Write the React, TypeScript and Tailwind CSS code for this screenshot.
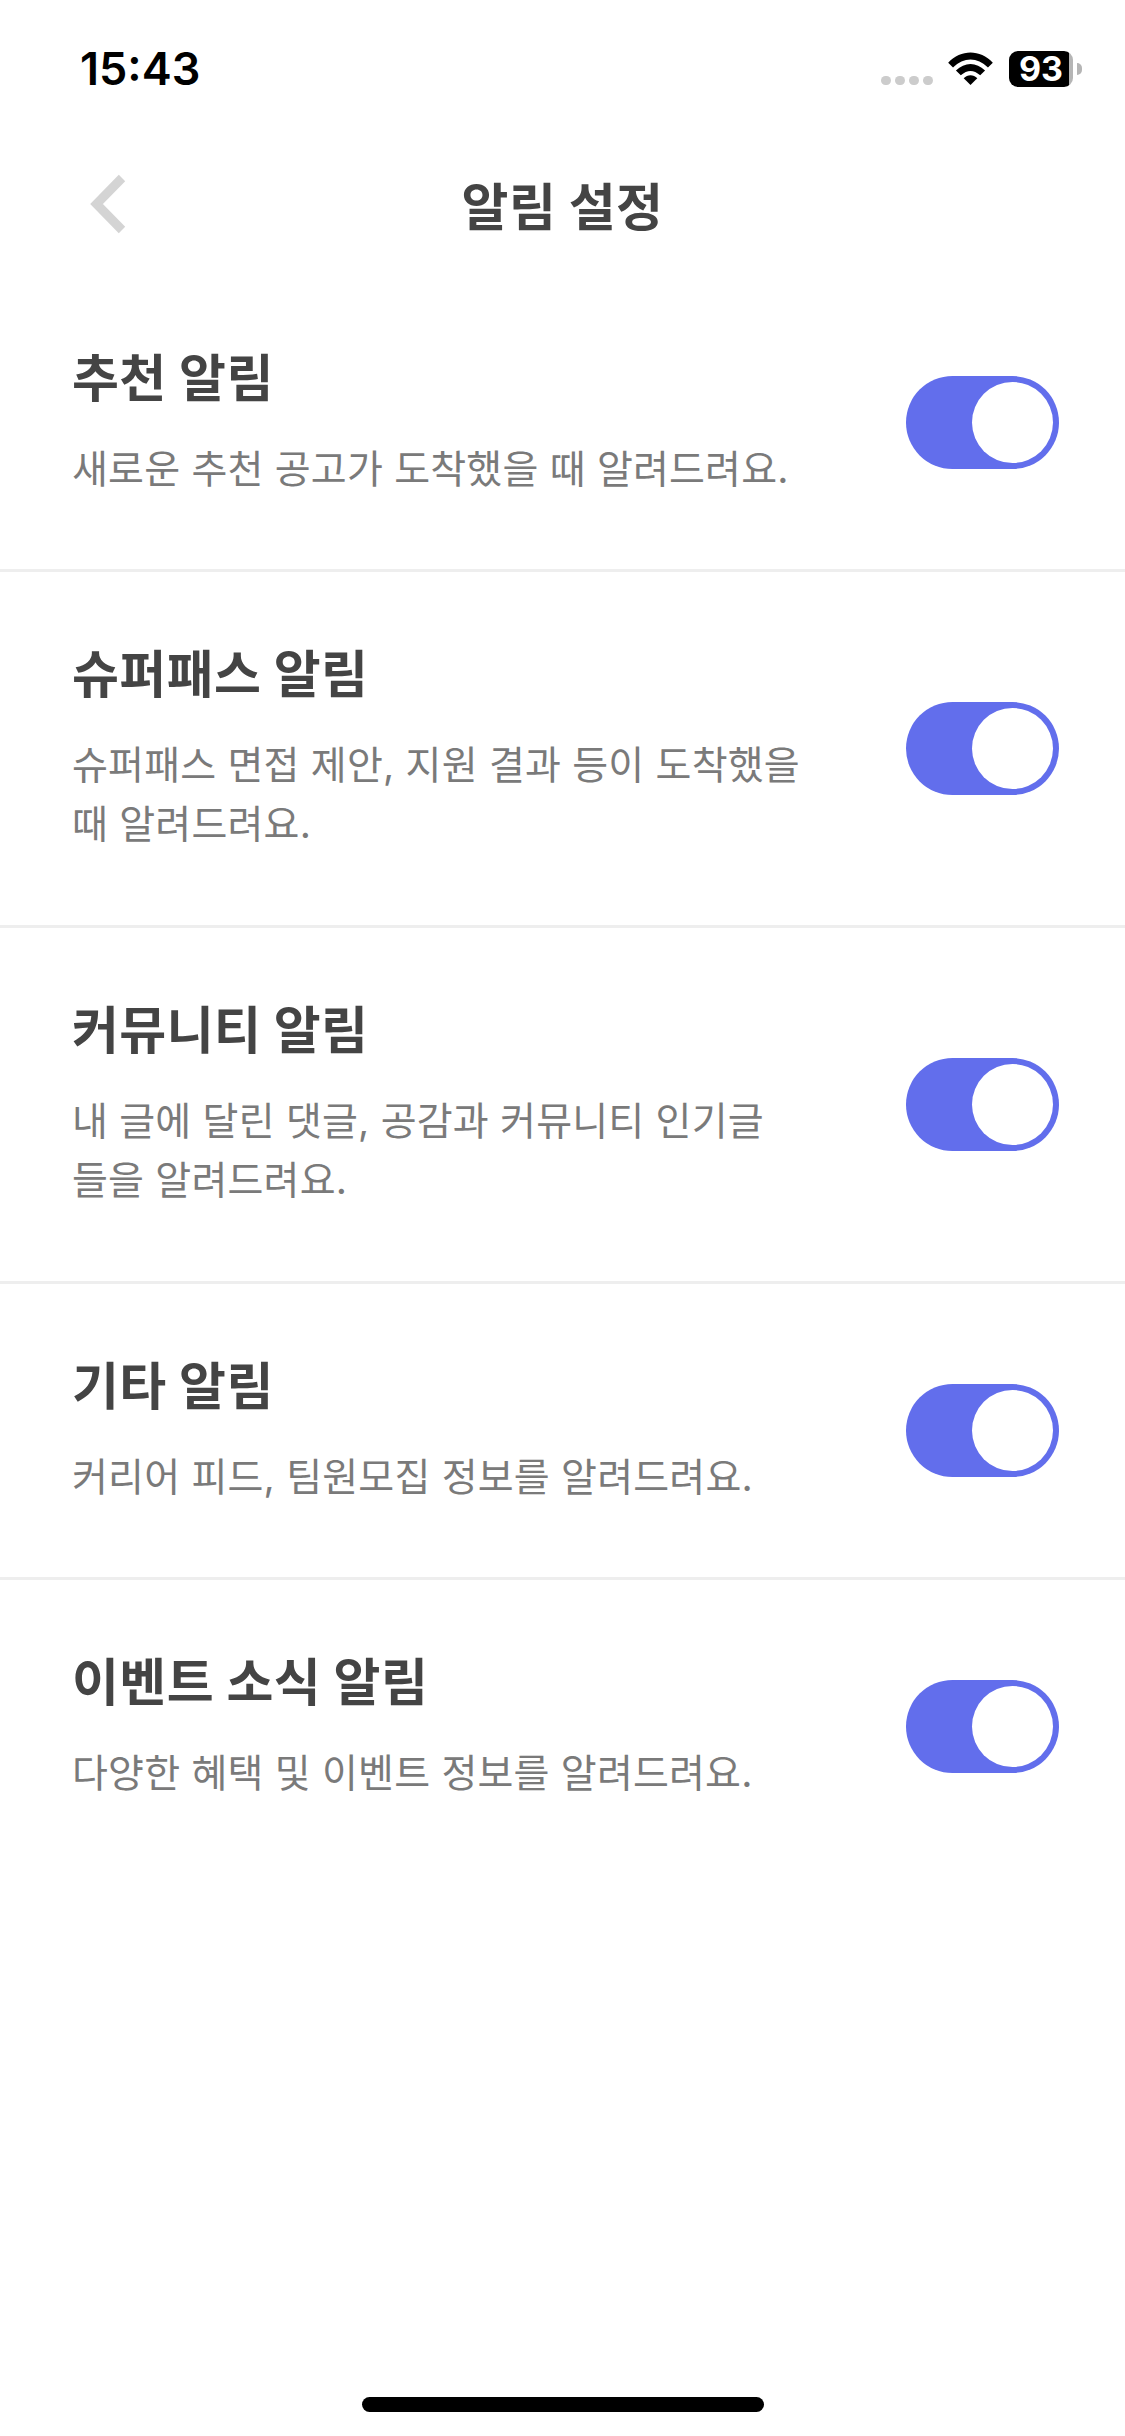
const F = "font-['Inter','Noto_Sans_CJK_KR',sans-serif]";

function Toggle() {
  return (
    <div className="w-[153px] h-[93px] rounded-full bg-[#626eec] p-[6px] flex justify-end shrink-0">
      <div className="w-[81px] h-[81px] rounded-full bg-white" />
    </div>
  );
}

function Row({ title, lines, h, last }: { title: string; lines: string[]; h: string; last?: boolean }) {
  return (
    <div className={`${h} ${last ? "" : "border-b-[3px] border-[#eeeeee]"} pl-[72px] pr-[66px] flex justify-between items-center`}>
      <div className="flex flex-col">
        <div className="text-[51px] leading-[62px] font-bold text-[#444444] tracking-[0.4px]">{title}</div>
        <div className="mt-[29px] text-[39px] leading-[59px] text-[#7a7a7a] tracking-[0.2px]">
          {lines.map((l) => (
            <div key={l}>{l}</div>
          ))}
        </div>
      </div>
      <Toggle />
    </div>
  );
}

export default function App() {
  return (
    <div className={`${F} relative w-[1125px] h-[2436px] bg-white overflow-hidden`}>
      <div className="h-[140px] pl-[80px] pr-[43px] flex justify-between items-start">
        <span className="mt-[42px] text-[45px] leading-[54px] font-semibold text-black">15:43</span>
        <div className="mt-[51px] h-[36px] flex items-end">
          <div className="flex gap-[4px] mb-[2px] mr-[15px]">
            <i className="block w-[10px] h-[9px] rounded-full bg-[#cccccc]" />
            <i className="block w-[10px] h-[9px] rounded-full bg-[#cccccc]" />
            <i className="block w-[10px] h-[9px] rounded-full bg-[#cccccc]" />
            <i className="block w-[10px] h-[9px] rounded-full bg-[#cccccc]" />
          </div>
          <svg width="45" height="33" viewBox="0 0 46 34" className="mb-[2px] mr-[16px]">
            <path d="M0 11 C13 -3 33 -3 46 11 L41 16 C30 5 16 5 5 16 Z" fill="#000" />
            <path d="M8 19 C17 10 29 10 38 19 L33 24 C26 18 20 18 13 24 Z" fill="#000" />
            <path d="M16 27 C20 23 26 23 30 27 L23 34 Z" fill="#000" />
          </svg>
          <div className="w-[64px] h-[36px] rounded-[9px] bg-[linear-gradient(to_right,#000_94%,#b5b5b5_94%)] text-white text-[34px] leading-[36px] font-bold text-center">93</div>
          <div className="w-[5px] h-[12px] rounded-r-full bg-[#b5b5b5] ml-[4px] self-center" />
        </div>
      </div>
      <div className="relative h-[136px] flex items-center justify-center">
        <svg width="36" height="60" viewBox="0 0 36 60" className="absolute left-[90px] top-[34px]">
          <path d="M32 4 L6.5 30 L32 56" fill="none" stroke="#d4d4d4" strokeWidth="9" />
        </svg>
        <span className="text-[51px] leading-[62px] font-bold text-[#444444] tracking-[0.4px]">알림 설정</span>
      </div>
      <Row h="h-[296px]" title="추천 알림" lines={["새로운 추천 공고가 도착했을 때 알려드려요."]} />
      <Row h="h-[356px]" title="슈퍼패스 알림" lines={["슈퍼패스 면접 제안, 지원 결과 등이 도착했을", "때 알려드려요."]} />
      <Row h="h-[356px]" title="커뮤니티 알림" lines={["내 글에 달린 댓글, 공감과 커뮤니티 인기글", "들을 알려드려요."]} />
      <Row h="h-[296px]" title="기타 알림" lines={["커리어 피드, 팀원모집 정보를 알려드려요."]} />
      <Row h="h-[293px]" last title="이벤트 소식 알림" lines={["다양한 혜택 및 이벤트 정보를 알려드려요."]} />
      <div className="absolute left-[362px] top-[2397px] w-[402px] h-[15px] rounded-full bg-black" />
    </div>
  );
}
